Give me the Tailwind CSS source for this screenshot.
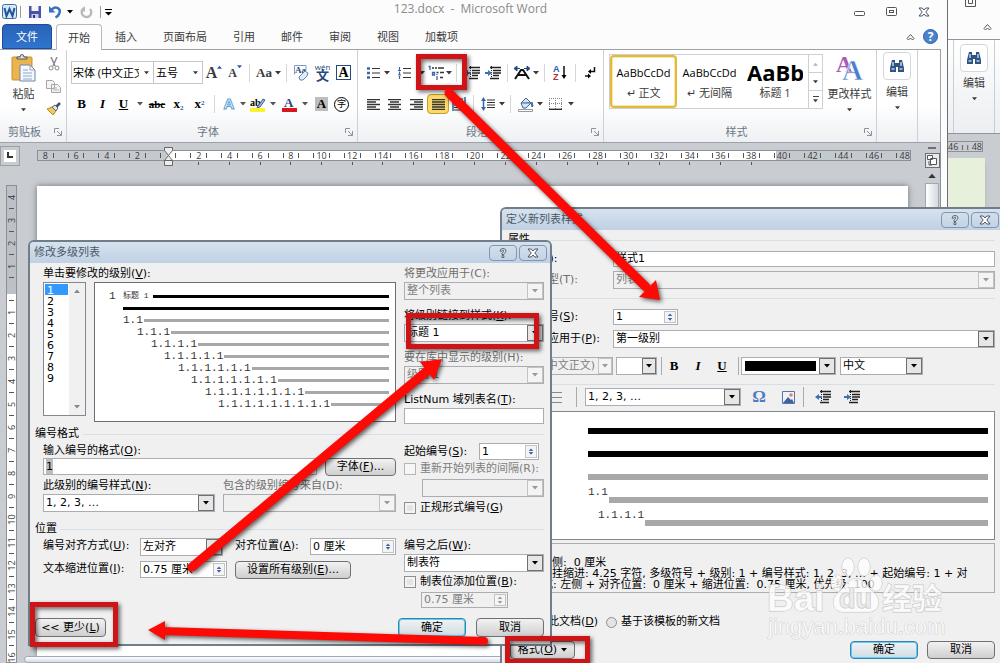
<!DOCTYPE html>
<html lang="zh-CN">
<head>
    <meta charset="UTF-8">
    <meta name="viewport" content="width=device-width, initial-scale=1.0">
    <title>123.docx - Microsoft Word</title>
    <script src="https://cdn.jsdelivr.net/npm/@tailwindcss/browser@4"></script>
</head>
<body class="relative h-screen overflow-hidden bg-[#c9cdd2] font-['Open_Sans','Noto_Sans_CJK_SC',sans-serif] text-[11px] leading-4 text-[#3b3b3b]">

    <!-- Shared symbols -->
    <svg class="hidden">
        <symbol id="caret" viewBox="0 0 6 4"><path d="M0 0h6L3 3.5z" fill="currentColor"/></symbol>
        <symbol id="caret-up" viewBox="0 0 6 4"><path d="M0 4h6L3 .5z" fill="currentColor"/></symbol>
        <symbol id="launcher" viewBox="0 0 8 8"><path d="M.5 5V.5H5M7.500 3v4.500H3M3 3l4 4" fill="none" stroke="#8a929c"/></symbol>
        <symbol id="binoculars" viewBox="0 0 16 16"><path d="M3 2h3v3h4V2h3l2 8v4H9V9H7v5H1v-4z" fill="#2f5482"/><path d="M2.500 11h3M10.500 11h3M4 4v4M12 4v4" stroke="#bcd3ee" stroke-width="1.500"/></symbol>
        <symbol id="outdent" viewBox="0 0 16 14"><path d="M5 1.500h11M5 12.500h9M8 4.500h8M8 7h8M8 9.500h6" stroke="#222" stroke-width="1.300"/><path d="M6.500 0v14" stroke="#222" stroke-dasharray="1 1"/><path d="M0 7l4-3v2h3v2H4v2z" fill="#3f6fb5"/></symbol>
        <symbol id="indent" viewBox="0 0 16 14"><path d="M5 1.500h11M5 12.500h9M8 4.500h8M8 7h8M8 9.500h6" stroke="#222" stroke-width="1.300"/><path d="M6.500 0v14" stroke="#222" stroke-dasharray="1 1"/><path d="M7 7L3 4v2H0v2h3v2z" fill="#3f6fb5"/></symbol>
        <symbol id="help" viewBox="0 0 12 12"><path d="M3 4.200Q3 1.500 6 1.500t3 2.500q0 1.500-2.200 2.700V7.500H5V6q2-1 2-2T6 3 4.800 4.200zM5 8.700h1.900v1.800H5z" fill="#fff" stroke="#4b5564" stroke-width=".9"/></symbol>
        <symbol id="close" viewBox="0 0 12 10"><path d="M1 1h3.200L6 3l1.800-2H11L7.800 5 11 9H7.800L6 7 4.200 9H1l3.200-4z" fill="#fff" stroke="#4b5564"/></symbol>
    </svg>

    <!-- Second Word window, partly hidden on the right -->
    <div class="absolute inset-y-0 left-[948px] right-0 flex flex-col overflow-hidden bg-[#c9cdd2]">
        <div class="flex h-[39px] shrink-0 flex-col items-end justify-between bg-[#fcfcfc] px-2 pb-2">
            <svg class="mr-4 h-[7px] w-[11px]" viewBox="0 0 11 7"><path d="M.5 0v6.500h10V0M3.500 0v3.500h4V0" fill="none" stroke="#555"/></svg>
            <svg class="h-2 w-[9px]" viewBox="0 0 9 8"><path d="M1 5.500L4.500 1.500 8 5.500 6.500 7 4.500 5 2.500 7z" fill="#fff" stroke="#555"/></svg>
        </div>
        <div class="flex h-[95px] shrink-0 border-y border-y-[#8f959c] bg-linear-to-b from-white to-[#eceef1]">
            <div class="w-[6px] border-r border-[#c9ced4]"></div>
            <button class="flex flex-1 flex-col items-center pt-1">
                <span class="flex h-7 w-7 items-center justify-center rounded-sm border border-[#d4d7db] bg-white"><svg class="size-4"><use href="#binoculars"/></svg></span>
                <span class="mt-[3px]">编辑</span>
                <svg class="mt-[6px] h-1 w-[5px]"><use href="#caret"/></svg>
            </button>
            <div class="w-[6px] border-l border-[#c9ced4]"></div>
        </div>
        <div class="mt-[7px] mr-[17px] flex h-[11px] shrink-0 items-center justify-between border border-l-0 border-[#8b9096] text-[9px] leading-none">
            <span>46</span><span>ı</span><span>ı</span><span>48</span>
        </div>
        <div class="mt-[6px] mr-[15px] flex-1 bg-[#e6f0da] shadow-md"></div>
    </div>

    <!-- Main Word window -->
    <div class="absolute inset-y-0 left-0 flex w-[948px] flex-col border-r border-[#6a6e73] bg-[#fcfcfc] pr-[6px]">
        <!-- Title bar -->
        <header class="relative flex h-6 shrink-0 items-center">
            <div class="flex items-center gap-[7px] pl-[2px]">
                <svg class="h-4 w-4" viewBox="0 0 16 16"><rect x=".5" y=".5" width="14" height="14" rx="2" fill="#d4e8f7" stroke="#3c6ea8"/><path d="M2.500 4l2 8 3-7 3 7 2-8" fill="none" stroke="#1f5597" stroke-width="2"/></svg>
                <span class="-ml-[5px] h-3 w-px bg-[#9a9a9a]"></span>
                <svg class="h-[14px] w-[14px]" viewBox="0 0 14 14"><path d="M1 1h12v12H1z" fill="#4a52a8"/><path d="M3.500 1h7v5h-7z" fill="#f4f6fb"/><path d="M3.500 9h7v4h-7z" fill="#c9cdea"/><path d="M5 10h2v3H5z" fill="#2d3580"/></svg>
                <svg class="h-[14px] w-[13px]" viewBox="0 0 13 14"><path d="M2 5.500C6 0 12 3 10.500 8q-1 3-4 4.500" fill="none" stroke="#3a6fc0" stroke-width="2.400"/><path d="M0 1v6.500h6.500z" fill="#3a6fc0"/></svg>
                <svg class="-ml-[2px] h-1 w-[6px] text-black"><use href="#caret"/></svg>
                <svg class="h-[13px] w-[13px]" viewBox="0 0 13 13"><path d="M3.500 2.500A4.800 4.800 0 1 0 10 3" fill="none" stroke="#bababa" stroke-width="2.400"/><path d="M5 0v6L.500 4z" fill="#bababa"/></svg>
                <span class="h-3 w-px bg-[#9a9a9a]"></span>
                <svg class="-ml-[3px] h-[7px] w-[7px]" viewBox="0 0 7 7"><path d="M0 .5h7" stroke="#000"/><path d="M0 3h7L3.500 6.500z"/></svg>
            </div>
            <h1 class="absolute inset-x-0 top-0 text-center text-[12px] leading-[18px] text-[#8a8a8a]">123.docx&nbsp; - &nbsp;Microsoft Word</h1>
            <div class="ml-auto flex items-center gap-[21px] pr-[11px]">
                <svg class="h-3 w-[11px]" viewBox="0 0 11 12"><rect x=".5" y="5.500" width="10" height="4" rx="1" fill="#fff" stroke="#555"/></svg>
                <svg class="h-[10px] w-[11px]" viewBox="0 0 11 10"><rect x=".5" y=".5" width="10" height="8" rx="1" fill="#fff" stroke="#555"/><rect x="3.500" y="3.500" width="4" height="2" fill="#fff" stroke="#555"/></svg>
                <svg class="h-[10px] w-3"><use href="#close"/></svg>
            </div>
        </header>

        <!-- Ribbon tabs -->
        <nav class="relative z-10 flex h-[25px] shrink-0 items-end pl-[2px]">
            <button class="h-full w-[50px] rounded-t-sm border border-[#1c4b9b] bg-linear-to-b from-[#2a63b8] to-[#2f74cf] text-white">文件</button>
            <button class="-mb-px ml-1 h-[26px] w-[46px] rounded-t-sm border border-b-0 border-[#b5b9be] bg-white">开始</button>
            <div class="flex h-full items-center gap-[26px] pl-[13px]">
                <button>插入</button>
                <button>页面布局</button>
                <button>引用</button>
                <button>邮件</button>
                <button>审阅</button>
                <button>视图</button>
                <button>加载项</button>
            </div>
            <div class="ml-auto flex h-full items-center gap-2 pr-[3px]">
                <svg class="h-2 w-[9px]" viewBox="0 0 9 8"><path d="M1 5.500L4.500 1.500 8 5.500 6.500 7 4.500 5 2.500 7z" fill="#fff" stroke="#555"/></svg>
                <button class="flex size-[15px] items-center justify-center rounded-full border border-[#2f62ab] bg-[#4b82cc] text-[12px] font-bold leading-none text-white">?</button>
            </div>
        </nav>

        <!-- Ribbon -->
        <section class="flex h-[94px] shrink-0 overflow-hidden border border-l-0 border-[#9da2a8] bg-linear-to-b from-white from-60% to-[#eef0f3]">
            <!-- Clipboard -->
            <div class="flex w-[67px] flex-col border-r border-[#cdd1d6]">
                <div class="flex flex-1">
                    <button class="flex w-11 flex-col items-center pl-[3px] pt-1">
                        <svg class="h-7 w-[25px]" viewBox="0 0 25 28"><rect x="1" y="3" width="20" height="23" rx="1" fill="#eab54f" stroke="#c98f2d"/><path d="M6 5V3h3q0-2.500 2-2.500T13 3h3v2z" fill="#ddd" stroke="#555"/><path d="M9 11h10l5 5v11H9z" fill="#f5f9ff" stroke="#6d84a8"/><path d="M19 11v5h5M12 16h5M12 19h9M12 22h9M12 25h9" fill="none" stroke="#8fa6c6"/></svg>
                        <span class="mt-1">粘贴</span>
                        <svg class="mt-[6px] h-1 w-[5px]"><use href="#caret"/></svg>
                    </button>
                    <div class="flex flex-col items-center gap-[9px] pt-[7px] pl-[2px]">
                        <svg class="h-[14px] w-3" viewBox="0 0 12 14"><path d="M3 0l4 9M9 0L5 9" stroke="#8c8c8c" stroke-width="1.500"/><circle cx="3" cy="11" r="2" fill="none" stroke="#8c8c8c"/><circle cx="9" cy="11" r="2" fill="none" stroke="#8c8c8c"/></svg>
                        <svg class="h-[13px] w-[15px]" viewBox="0 0 15 13"><path d="M.5.500h6l2 2v6h-8zM5.500 4.500h6l3 3v5h-9z" fill="#f4f4f4" stroke="#a5a5a5"/><path d="M7 8h4M7 10h6" stroke="#b5b5b5"/></svg>
                        <svg class="h-[14px] w-[15px]" viewBox="0 0 15 14"><path d="M1 7l5-2 4 4-3 4z" fill="#f1c757" stroke="#b78b25"/><path d="M6 5l3-2 3 3-2 3z" fill="#dfe5ee" stroke="#56657c"/><path d="M10.500 4.500L14 1" stroke="#40516b" stroke-width="2.500"/></svg>
                    </div>
                </div>
                <div class="flex h-[20px] items-center justify-between pr-1 pl-2 text-[#6c7684]"><span>剪贴板</span><svg class="h-2 w-2"><use href="#launcher"/></svg></div>
            </div>

            <!-- Font -->
            <div class="flex w-[291px] flex-col border-r border-[#cdd1d6] pl-[4px]">
                <div class="mt-[11px] flex h-[23px] items-center">
                    <div class="flex h-full w-[83px] items-center border border-[#c3c7cc] bg-white pr-1">
                        <select aria-label="字体" class="h-full min-w-0 flex-1 appearance-none px-px text-black outline-none"><option>宋体 (中文正文)</option></select>
                        <svg class="ml-1 h-1 w-[5px]"><use href="#caret"/></svg>
                    </div>
                    <div class="-ml-px flex h-full w-[50px] items-center border border-[#c3c7cc] bg-white pr-1">
                        <select aria-label="字号" class="h-full min-w-0 flex-1 appearance-none px-[2px] text-black outline-none"><option>五号</option></select>
                        <svg class="h-1 w-[5px]"><use href="#caret"/></svg>
                    </div>
                    <button class="flex w-[22px] justify-center font-['Liberation_Serif',serif] text-[16px] font-bold">A<svg class="h-1 w-[5px] text-[#2c5ba8]"><use href="#caret-up"/></svg></button>
                    <button class="flex w-[20px] justify-center font-['Liberation_Serif',serif] text-[12px] font-bold">A<svg class="h-1 w-[5px] text-[#2c5ba8]"><use href="#caret"/></svg></button>
                    <span class="mx-1 h-[18px] w-px bg-[#d3d6da]"></span>
                    <button class="w-5 font-['Liberation_Serif',serif] text-[13px] font-bold">Aa</button>
                    <svg class="mx-px h-1 w-[6px]"><use href="#caret"/></svg>
                    <span class="mx-1 h-[18px] w-px bg-[#d3d6da]"></span>
                    <button class="flex w-[21px] justify-center"><svg class="h-4 w-[15px]" viewBox="0 0 15 16"><path d="M.500 9.500v-9H12v5" fill="none" stroke="#7e9bc7"/><text x="1" y="8" font-size="9" font-weight="bold" font-family="Liberation Serif" fill="#26477c">Aa</text><path d="M5 12l6-6 3 2-1 3-4 4H6z" fill="#e4ecf8" stroke="#6484b4"/></svg></button>
                    <button class="flex w-[21px] flex-col items-center text-[#26477c]"><span class="text-[8px] leading-[6px]">wén</span><span class="text-[13px] leading-[11px] font-bold">文</span></button>
                    <button class="flex w-[21px] justify-center"><span class="size-[15px] border border-[#26477c] font-['Liberation_Serif',serif] text-[14px] font-bold leading-[14px] text-black">A</span></button>
                </div>
                <div class="mt-[9px] flex h-[22px] items-center font-['Liberation_Serif','Noto_Sans_CJK_SC',serif] text-[13px] font-bold text-black">
                    <button class="w-[21px]">B</button>
                    <button class="w-[21px] italic">I</button>
                    <button class="w-[21px] underline">U</button>
                    <svg class="mx-[3px] h-1 w-[6px] text-[#555]"><use href="#caret"/></svg>
                    <button class="w-[22px] text-[11px] line-through">abc</button>
                    <button class="w-[21px]">x<sub class="text-[7px] text-[#2c5ba8]">2</sub></button>
                    <button class="w-[21px]">x<sup class="text-[7px] text-[#2c5ba8]">2</sup></button>
                    <span class="mx-1 h-[18px] w-px bg-[#d3d6da]"></span>
                    <button class="w-5 font-['Liberation_Sans',sans-serif] text-[15px] text-white [-webkit-text-stroke:1px_#5ba3d6]">A</button>
                    <svg class="mx-px h-1 w-[6px] text-[#555]"><use href="#caret"/></svg>
                    <button class="flex w-[22px] flex-col items-center"><svg class="h-[15px] w-4" viewBox="0 0 16 15"><text x="0" y="9" font-size="10" font-family="Liberation Serif">ab</text><path d="M8 9l5-7 2 1-5 7-3 1z" fill="#9db5da" stroke="#41608f"/><path d="M0 11h15v4H0z" fill="#fdf32c"/></svg></button>
                    <svg class="mx-px h-1 w-[6px] text-[#555]"><use href="#caret"/></svg>
                    <button class="flex w-6 flex-col items-center"><svg class="h-[15px] w-4" viewBox="0 0 16 15"><text x="3" y="10" font-size="13" font-family="Liberation Serif" fill="#26477c">A</text><path d="M1 11h15v4H1z" fill="#d8171c"/></svg></button>
                    <svg class="mx-px h-1 w-[6px] text-[#555]"><use href="#caret"/></svg>
                    <button class="flex w-[25px] justify-center"><span class="h-[14px] w-[13px] bg-[#bdbdbd] leading-[14px]">A</span></button>
                    <button class="size-[15px] rounded-full border border-black text-[9px] leading-[12px] font-normal">字</button>
                </div>
                <div class="mt-auto flex h-[20px] items-center pr-1 text-[#6c7684]"><span class="flex-1 text-center">字体</span><svg class="h-2 w-2"><use href="#launcher"/></svg></div>
            </div>

            <!-- Paragraph -->
            <div class="flex w-[246px] flex-col border-r border-[#cdd1d6] pl-[5px]">
                <div class="mt-[11px] flex h-[23px] items-center">
                    <button class="flex w-5 justify-center"><svg class="h-3 w-[13px]" viewBox="0 0 13 12"><path d="M0 1.500h3M0 6h3M0 10.500h3" stroke="#3a66a8" stroke-width="2.500"/><path d="M5 1.500h8M5 6h8M5 10.500h8" stroke="#333" stroke-width="1.200"/></svg></button>
                    <svg class="mx-px h-1 w-[6px]"><use href="#caret"/></svg>
                    <button class="flex w-[27px] justify-center"><svg class="h-3 w-[13px]" viewBox="0 0 13 12"><path d="M1.500 0v3.500M1.500 4.500V8M1.500 9v3M0 3.500h3M0 8h3" stroke="#3a66a8" stroke-width="1.200"/><path d="M5 1.500h8M5 6h8M5 10.500h8" stroke="#333" stroke-width="1.200"/></svg></button>
                    <svg class="mx-px h-1 w-[6px]"><use href="#caret"/></svg>
                    <button class="flex w-[20px] justify-center"><svg class="h-[15px] w-4" viewBox="0 0 16 15"><path d="M.5 1.500h1.500V5M4.500 7.500h2V10h-2zM9 11v4M9 9v1" fill="none" stroke="#3a66a8" stroke-width="1.300"/><path d="M4 3h2M7 3h2M10 3h6M8.500 7.500h2M12 7.500h4M12 12.500h3" stroke="#333" stroke-width="1.400"/></svg></button>
                    <svg class="h-1 w-[6px]"><use href="#caret"/></svg>
                    <span class="mx-1 h-[18px] w-px bg-[#d3d6da]"></span>
                    <button class="flex w-[22px] justify-center"><svg class="h-[14px] w-4"><use href="#outdent"/></svg></button>
                    <button class="flex w-5 justify-center"><svg class="h-[14px] w-4"><use href="#indent"/></svg></button>
                    <span class="mx-1 h-[18px] w-px bg-[#d3d6da]"></span>
                    <button class="flex w-5 justify-center"><svg class="h-[14px] w-4" viewBox="0 0 16 14"><path d="M1 13L7 4h2l6 9M4 9h8" fill="none" stroke="#111" stroke-width="2"/><path d="M0 2.500L3 0v5zM16 2.500L13 0v5zM3 2.500h3M10 2.500h3" fill="#26477c" stroke="#26477c"/></svg></button>
                    <svg class="mx-px h-1 w-[6px]"><use href="#caret"/></svg>
                    <span class="mx-1 h-[18px] w-px bg-[#d3d6da]"></span>
                    <button class="flex w-[22px] justify-center"><svg class="h-4 w-[14px]" viewBox="0 0 14 16"><text x="0" y="7" font-size="9" font-weight="bold" font-family="Liberation Sans" fill="#2c5ba8">A</text><text x="0" y="15" font-size="9" font-weight="bold" font-family="Liberation Sans" fill="#a33">Z</text><path d="M11 1v11" stroke="#111" stroke-width="1.500"/><path d="M8.500 10h5L11 14z"/></svg></button>
                    <span class="mx-1 h-[18px] w-px bg-[#d3d6da]"></span>
                    <button class="flex w-5 justify-center"><svg class="h-3 w-[11px]" viewBox="0 0 11 12"><path d="M9.500 0v4.500H5M5 9H0" fill="none" stroke="#111" stroke-width="1.500"/><path d="M6 2v5L3 4.500zM3 6.500v5L6 9z"/></svg></button>
                </div>
                <div class="mt-[9px] flex h-[22px] items-center">
                    <button class="flex w-5 justify-center"><svg class="h-[11px] w-[13px]" viewBox="0 0 13 11"><path d="M0 .5h13M0 3h9M0 5.500h13M0 8h9M0 10.500h13" stroke="#333" stroke-width="1.300"/></svg></button>
                    <button class="flex w-[22px] justify-center"><svg class="h-[11px] w-[13px]" viewBox="0 0 13 11"><path d="M0 .5h13M2 3h9M0 5.500h13M2 8h9M0 10.500h13" stroke="#333" stroke-width="1.300"/></svg></button>
                    <button class="flex w-[22px] justify-center"><svg class="h-[11px] w-[13px]" viewBox="0 0 13 11"><path d="M0 .5h13M4 3h9M0 5.500h13M4 8h9M0 10.500h13" stroke="#333" stroke-width="1.300"/></svg></button>
                    <button class="flex h-5 w-[22px] items-center justify-center rounded-sm border border-[#c29b29] bg-[#fbd968]"><svg class="h-[11px] w-[13px]" viewBox="0 0 13 11"><path d="M0 .5h13M0 3h13M0 5.500h13M0 8h13M0 10.500h13" stroke="#333" stroke-width="1.300"/></svg></button>
                    <button class="flex w-5 justify-center"><svg class="h-[14px] w-[14px]" viewBox="0 0 14 14"><path d="M1 0v14M13 0v14" stroke="#3a66a8" stroke-width="1.500"/><path d="M2 5.500h10M2 8h10M2 10.500h10M2 13h10M3 2h8" stroke="#333"/></svg></button>
                    <span class="mx-1 h-[18px] w-px bg-[#d3d6da]"></span>
                    <button class="flex w-5 justify-center"><svg class="h-[14px] w-[14px]" viewBox="0 0 14 14"><path d="M2.500 3v8" stroke="#3a66a8" stroke-width="1.500"/><path d="M0 4l2.500-4L5 4zM0 10l2.500 4L5 10z" fill="#3a66a8"/><path d="M6 3h8M6 5.500h8M6 8h8M6 10.500h8" stroke="#333" stroke-width="1.200"/></svg></button>
                    <svg class="mx-px h-1 w-[6px]"><use href="#caret"/></svg>
                    <span class="mx-1 h-[18px] w-px bg-[#d3d6da]"></span>
                    <button class="flex w-[21px] justify-center"><svg class="h-[15px] w-4" viewBox="0 0 16 15"><path d="M3 6l5-5 5 5-5 5H5z" fill="#d6e4f5" stroke="#3f669c"/><path d="M3 6h10l1 4 1-1-1-4" fill="#5d8ac6" stroke="#3f669c"/><path d="M.5 12.500h14v2H.500z" fill="#fff" stroke="#999"/></svg></button>
                    <svg class="mx-px h-1 w-[6px]"><use href="#caret"/></svg>
                    <button class="flex w-[23px] justify-center"><svg class="h-3 w-[13px]" viewBox="0 0 13 12"><path d="M.5 0v11M6.500 0v11M12.500 0v11M0 .5h13M0 5.500h13" stroke="#888" stroke-dasharray="1 1"/><path d="M0 11.300h13" stroke="#222" stroke-width="1.300"/></svg></button>
                    <svg class="mx-px h-1 w-[6px]"><use href="#caret"/></svg>
                </div>
                <div class="mt-auto flex h-[20px] items-center pr-1 text-[#6c7684]"><span class="flex-1 text-center">段落</span><svg class="h-2 w-2"><use href="#launcher"/></svg></div>
            </div>

            <!-- Styles -->
            <div class="flex w-[273px] flex-col border-r border-[#cdd1d6] pl-[5px]">
                <div class="flex flex-1 pt-1">
                    <div class="flex h-[55px] w-[214px] border border-[#cdd1d6] bg-white">
                        <button class="flex w-[67px] flex-col items-center rounded-sm border-2 border-[#e3b93c] pt-1 inset-ring inset-ring-[#f9e7a5]"><span class="h-[24px] leading-[24px] text-[11px] text-black">AaBbCcDd</span><span>↵ 正文</span></button>
                        <button class="flex w-[65px] flex-col items-center pt-[6px]"><span class="h-[24px] leading-[24px] text-[11px] text-black">AaBbCcDd</span><span>↵ 无间隔</span></button>
                        <button class="flex w-[66px] flex-col items-center overflow-hidden pt-[6px]"><span class="h-[24px] w-[56px] overflow-hidden text-left text-[22px] font-bold leading-[22px] text-black">AaBb</span><span>标题 1</span></button>
                        <div class="flex flex-1 flex-col divide-y divide-[#cdd1d6] border-l border-[#cdd1d6]">
                            <button class="flex flex-1 items-center justify-center text-[#b5b5b5]"><svg class="h-1 w-[5px]"><use href="#caret-up"/></svg></button>
                            <button class="flex flex-1 items-center justify-center"><svg class="h-1 w-[5px]"><use href="#caret"/></svg></button>
                            <button class="flex flex-1 flex-col items-center justify-center gap-[2px]"><span class="h-px w-[6px] bg-[#444]"></span><svg class="h-1 w-[5px]"><use href="#caret"/></svg></button>
                        </div>
                    </div>
                    <button class="flex flex-1 flex-col items-center">
                        <svg class="h-7 w-7" viewBox="0 0 28 28"><text x="0" y="18" font-size="23" font-weight="bold" font-family="Liberation Serif" fill="#a95bb5">A</text><text x="6" y="26" font-size="29" font-weight="bold" font-family="Liberation Serif" fill="#4a7fcc" stroke="#fff" stroke-width=".6">A</text></svg>
                        <span class="mt-1">更改样式</span>
                        <svg class="mt-[6px] h-1 w-[5px]"><use href="#caret"/></svg>
                    </button>
                </div>
                <div class="flex h-[20px] items-center pr-1 text-[#6c7684]"><span class="flex-1 text-center">样式</span><svg class="h-2 w-2"><use href="#launcher"/></svg></div>
            </div>

            <!-- Editing -->
            <div class="w-[41px] border-r border-[#cdd1d6]">
                <button class="flex w-full flex-col items-center pt-[2px]">
                    <span class="flex h-7 w-7 items-center justify-center rounded-sm border border-[#d4d7db] bg-white"><svg class="size-4"><use href="#binoculars"/></svg></span>
                    <span class="mt-1">编辑</span>
                    <svg class="mt-[6px] h-1 w-[5px]"><use href="#caret"/></svg>
                </button>
            </div>
        </section>

        <!-- Document area -->
        <main class="flex min-h-0 flex-1 border-r border-[#8b9096] bg-[#c9cdd2]">
            <div class="flex w-[23px] shrink-0 flex-col items-center gap-[19px] pt-[3px]">
                <div class="flex size-5 shrink-0 items-center justify-center self-start border border-[#9ba0a6]"><span class="size-3 bg-white pt-[2px] pl-[3px]"><span class="block size-[6px] border-b-2 border-l-2 border-[#333]"></span></span></div>
                <div id="v-ruler" class="min-h-0 w-[11px] flex-1 overflow-hidden border border-[#8b9096] bg-[linear-gradient(#bcc1c7_108px,#fff_108px)] text-[9px] leading-none"></div>
            </div>
            <div class="flex min-w-0 flex-1 flex-col pl-[14px]">
                <div class="relative mt-[7px] mr-[13px] h-[22px] shrink-0">
                    <div class="h-[11px] overflow-hidden border border-[#8b9096] bg-[linear-gradient(to_right,#c4c9ce_131px,#fff_131px,#fff_738px,#c4c9ce_738px)]">
                        <div id="h-ruler" class="-mr-[10px] -ml-[8px] grid h-full grid-cols-[repeat(29,minmax(0,1fr))] text-[9px] leading-none"></div>
                    </div>
                    <div id="tab-stops" class="-mr-[9px] -ml-[7px] mt-px grid grid-cols-[repeat(29,minmax(0,1fr))] justify-items-center"></div>
                    <svg class="absolute -top-[3px] left-[127px] h-5 w-[9px]" viewBox="0 0 9 20"><path d="M.5.500h8v3l-4 5 4 5h-8l4-5-4-5zM.500 13.500h8v5h-8z" fill="#eee" stroke="#666"/></svg>
                </div>
                <div class="mt-[14px] mr-4 flex-1 bg-white shadow-[0_0_6px_#6b7076]"></div>
                <div class="-ml-[13px] flex h-[7px] shrink-0 items-center justify-center rounded-sm border border-[#9fa8b4] bg-linear-to-b from-white to-[#d5dde8]"></div>
            </div>
            <div class="flex w-[16px] shrink-0 flex-col items-center">
                <span class="mt-1 h-[2px] w-2 bg-[#6b7076]"></span>
                <button class="mt-1 flex size-[15px] shrink-0 items-center justify-center border border-[#6b7076] bg-[#e8eaed]"><svg class="h-[11px] w-[11px]" viewBox="0 0 11 11"><path d="M.500.500h5v4h-5zM3.500 3.500h6v6h-6zM2 6v4h3" fill="#fff" stroke="#555"/></svg></button>
                <svg class="my-[5px] h-[5px] w-2 shrink-0 text-[#333]" viewBox="0 0 6 4"><path d="M0 4h6L3 .5z" fill="currentColor"/></svg>
                <div class="w-[14px] flex-1 border border-[#9fa8b4] bg-linear-to-r from-white to-[#d5dae0]"></div>
            </div>
        </main>
    </div>

    <!-- Dialog: define new list style -->
    <section class="absolute top-[207px] -right-1 bottom-0 left-[500px] flex flex-col overflow-hidden rounded-tl-md border-t-2 border-l-2 border-[#717d89] bg-[#f0f0f0] font-['DejaVu_Sans','Noto_Sans_CJK_SC',sans-serif] text-black">
        <header class="flex h-[21px] shrink-0 items-center bg-linear-to-b from-[#d6e2ee] to-[#c0d1e4] pr-[5px] pl-1 text-[#4c5866]">
            <h2 class="flex-1">定义新列表样式</h2>
            <button class="mr-[2px] flex h-4 w-7 items-center justify-center rounded-sm border border-[#8496ad]"><svg class="size-3"><use href="#help"/></svg></button>
            <button class="flex h-4 w-7 items-center justify-center rounded-sm border border-[#8496ad]"><svg class="h-[10px] w-3"><use href="#close"/></svg></button>
        </header>
        <div class="flex flex-1 flex-col pr-[9px] pl-[6px]">
            <div class="mt-[2px] flex h-4 items-center gap-1"><span>属性</span><span class="h-px flex-1 bg-[#d5dfe5]"></span></div>
            <div class="mt-[3px] flex h-4 items-center pl-[7px]">
                <label for="style-name" class="w-[98px]">名称(<u>N</u>):</label>
                <input id="style-name" value="样式1" class="h-4 min-w-0 flex-1 border border-[#abadb3] bg-white px-[2px] outline-none">
            </div>
            <div class="mt-1 flex h-[18px] items-center pl-[7px]">
                <label for="style-type" class="w-[98px] text-[#6d6d6d]">样式类型(T):</label>
                <div class="flex h-full min-w-0 flex-1 border border-[#abadb3]">
                    <select id="style-type" disabled class="min-w-0 flex-1 appearance-none px-[2px] text-[#7d7d7d] opacity-100 outline-none"><option>列表</option></select>
                    <span class="flex w-4 items-center justify-center border border-[#c3c3c3] bg-[#f4f4f4] text-[#999]"><svg class="h-1 w-[6px]"><use href="#caret"/></svg></span>
                </div>
            </div>
            <div class="mt-px flex h-4 items-center gap-1"><span>格式</span><span class="h-px flex-1 bg-[#d5dfe5]"></span></div>
            <div class="mt-[3px] flex h-4 items-center pl-[7px]">
                <label for="style-start" class="w-[98px]">起始编号(<u>S</u>):</label>
                <div class="flex h-full w-[65px] border border-[#abadb3] bg-white">
                    <input id="style-start" value="1" class="min-w-0 flex-1 px-[2px] outline-none">
                    <span class="m-px flex w-3 flex-col items-center justify-evenly border border-[#c3c3c3] bg-[#f4f4f4] text-[#4360a0]"><svg class="h-[3px] w-[6px]"><use href="#caret-up"/></svg><svg class="h-[3px] w-[6px]"><use href="#caret"/></svg></span>
                </div>
            </div>
            <div class="mt-[5px] flex h-[18px] items-center pl-[7px]">
                <label for="style-apply" class="w-[98px]">将格式应用于(<u>P</u>):</label>
                <div class="flex h-full min-w-0 flex-1 border border-[#abadb3] bg-white">
                    <select id="style-apply" class="min-w-0 flex-1 appearance-none px-[2px] outline-none"><option>第一级别</option></select>
                    <span class="flex w-4 items-center justify-center border border-[#707070] bg-[#e6e6e6]"><svg class="h-1 w-[6px]"><use href="#caret"/></svg></span>
                </div>
            </div>
            <div class="mt-[9px] flex h-[18px] items-center pl-[7px]">
                <div class="flex h-full w-[98px] border border-[#abadb3]">
                    <select aria-label="字体" disabled class="min-w-0 flex-1 appearance-none px-px text-[#7d7d7d] opacity-100 outline-none"><option>宋体 (中文正文)</option></select>
                    <span class="flex w-[14px] items-center justify-center border border-[#c3c3c3] bg-[#f4f4f4] text-[#999]"><svg class="h-1 w-[6px]"><use href="#caret"/></svg></span>
                </div>
                <div class="ml-[3px] flex h-full w-[41px] border border-[#abadb3] bg-white">
                    <select aria-label="字号" class="min-w-0 flex-1 appearance-none outline-none"><option></option></select>
                    <span class="flex w-[14px] items-center justify-center border border-[#707070] bg-[#e6e6e6]"><svg class="h-1 w-[6px]"><use href="#caret"/></svg></span>
                </div>
                <span class="ml-1 h-full w-px bg-[#aaa]"></span>
                <div class="flex font-['Liberation_Serif',serif] text-[13px] font-bold">
                    <button class="w-6">B</button>
                    <button class="w-6 italic">I</button>
                    <button class="w-6 underline">U</button>
                </div>
                <span class="ml-1 h-full w-px bg-[#aaa]"></span>
                <button aria-label="字体颜色" class="ml-[2px] flex h-full w-[95px] border border-[#abadb3] bg-white">
                    <span class="m-[3px] h-[10px] flex-1 bg-black"></span>
                    <span class="flex h-full w-4 items-center justify-center border border-[#707070] bg-[#e6e6e6]"><svg class="h-1 w-[6px]"><use href="#caret"/></svg></span>
                </button>
                <div class="ml-1 flex h-full w-[83px] border border-[#abadb3] bg-white">
                    <select aria-label="语言" class="min-w-0 flex-1 appearance-none px-[2px] outline-none"><option>中文</option></select>
                    <span class="flex w-4 items-center justify-center border border-[#707070] bg-[#e6e6e6]"><svg class="h-1 w-[6px]"><use href="#caret"/></svg></span>
                </div>
            </div>
            <div class="mt-[9px] h-px bg-[#d5dfe5]"></div>
            <div class="mt-[3px] flex h-[18px] items-center pl-[38px]">
                <svg class="h-[11px] w-4" viewBox="0 0 16 11"><path d="M5 .5h11M5 5.500h11M5 10.500h11" stroke="#888"/></svg>
                <span class="ml-[14px] h-5 w-px bg-[#aaa]"></span>
                <div class="ml-2 flex h-full w-[156px] border border-[#abadb3] bg-white">
                    <select aria-label="编号样式" class="min-w-0 flex-1 appearance-none px-[2px] outline-none"><option>1, 2, 3, …</option></select>
                    <span class="flex w-4 items-center justify-center border border-[#707070] bg-[#e6e6e6]"><svg class="h-1 w-[6px]"><use href="#caret"/></svg></span>
                </div>
                <button class="ml-[6px] w-6 font-['Liberation_Serif',serif] text-[17px] font-bold text-[#4b7cc4]">Ω</button>
                <button class="ml-[11px]"><svg class="h-[13px] w-[13px]" viewBox="0 0 13 13"><path d="M.5.500h12v12H.500z" fill="#eef3fb" stroke="#5a76a6"/><path d="M1 12l5-6 3 3 1-1 2 4z" fill="#3d63a4"/><circle cx="9" cy="4" r="1.800" fill="#d98b57"/></svg></button>
                <span class="ml-2 h-5 w-px bg-[#aaa]"></span>
                <button class="ml-[11px]"><svg class="h-[14px] w-4"><use href="#outdent"/></svg></button>
                <button class="ml-[13px]"><svg class="h-[14px] w-4"><use href="#indent"/></svg></button>
            </div>
            <!-- Preview -->
            <div class="mt-[5px] ml-[7px] h-[129px] border border-[#828790] bg-white pr-[6px] pl-[72px] font-['Liberation_Mono',monospace] text-[11px] text-[#333]">
                <div class="flex h-[22px] items-end"><span class="h-[6px] flex-1 bg-black"></span></div>
                <div class="flex h-[23px] items-end"><span class="h-[6px] flex-1 bg-black"></span></div>
                <div class="flex h-[23px] items-end"><span class="h-[6px] flex-1 bg-[#a8a8a8]"></span></div>
                <div class="flex h-[23px] items-end gap-px"><span class="leading-[22px]">1.1</span><span class="h-[6px] flex-1 bg-[#a8a8a8]"></span></div>
                <div class="flex h-[23px] items-end gap-px pl-[10px]"><span class="leading-[22px]">1.1.1.1</span><span class="h-[6px] flex-1 bg-[#a8a8a8]"></span></div>
            </div>
            <div class="mt-[3px] ml-[7px] h-[50px] overflow-hidden border border-[#abadb3] pt-[2px] pl-1 leading-[11px] whitespace-pre">缩进:
<span class="ml-[21px]">左侧:  0 厘米</span>
<span class="ml-[21px]">悬挂缩进: 4.25 字符, 多级符号 + 级别: 1 + 编号样式: 1, 2, 3, … + 起始编号: 1 + 对</span>
齐方式: 左侧 + 对齐位置:  0 厘米 + 缩进位置:  0.75 厘米, 优先级: 100</div>
            <div class="mt-[21px] flex h-4 items-center pl-[7px]">
                <label class="flex w-[91px] items-center whitespace-nowrap"><input type="radio" name="scope" checked class="size-[11px]"><span>仅限此文档(<u>D</u>)</span></label>
                <label class="flex items-center gap-1"><input type="radio" name="scope" class="size-[11px] appearance-none rounded-full border border-[#8e8f8f] bg-[#e4e4e4]">基于该模板的新文档</label>
            </div>
            <div class="mt-[11px] flex h-[18px] items-center gap-[9px] pl-[2px]">
                <button class="mr-auto flex h-full w-[65px] items-center justify-center gap-1 rounded-sm border border-[#707070] bg-linear-to-b from-[#f2f2f2] to-[#cfcfcf]"><span>格式(<u>O</u>)</span><svg class="h-1 w-[6px]"><use href="#caret"/></svg></button>
                <button class="h-full w-[68px] rounded-sm border border-[#3c7fb1] bg-linear-to-b from-[#f2f2f2] to-[#cfdde4] inset-ring inset-ring-[#5fd0f0]">确定</button>
                <button class="h-full w-[68px] rounded-sm border border-[#707070] bg-linear-to-b from-[#f2f2f2] to-[#cfcfcf]">取消</button>
            </div>
        </div>
    </section>

    <!-- Dialog: modify multilevel list -->
    <section class="absolute top-[240px] left-[28px] h-[406px] w-[524px] overflow-hidden rounded-t-md border-2 border-[#717d89] bg-[#f0f0f0] font-['DejaVu_Sans','Noto_Sans_CJK_SC',sans-serif] text-black">
        <header class="flex h-[21px] items-center bg-linear-to-b from-[#d6e2ee] to-[#c0d1e4] pr-[3px] pl-1 text-[#4c5866]">
            <h2 class="flex-1">修改多级列表</h2>
            <button class="mr-[2px] flex h-4 w-7 items-center justify-center rounded-sm border border-[#8496ad]"><svg class="size-3"><use href="#help"/></svg></button>
            <button class="flex h-4 w-7 items-center justify-center rounded-sm border border-[#8496ad]"><svg class="h-[10px] w-3"><use href="#close"/></svg></button>
        </header>
        <div class="pr-[6px] pl-[5px]">
            <!-- Levels and links -->
            <div class="mt-[2px] grid grid-cols-[361px_1fr] gap-x-2">
                <div class="pl-2">
                    <label for="level" class="block h-[17px] leading-[18px]">单击要修改的级别(<u>V</u>):</label>
                    <div class="flex items-start gap-2">
                        <div class="flex h-[134px] w-[43px] border border-[#828790] bg-white">
                            <select id="level" size="9" class="h-full min-w-0 flex-1 appearance-none overflow-hidden p-px outline-none">
                                <option selected class="h-[11px] min-h-0 p-0 pl-[2px] leading-[11px] checked:bg-[linear-gradient(#3399ff,#3399ff)] checked:text-white">1</option>
                                <option class="h-[11px] min-h-0 p-0 pl-[2px] leading-[11px]">2</option>
                                <option class="h-[11px] min-h-0 p-0 pl-[2px] leading-[11px]">3</option>
                                <option class="h-[11px] min-h-0 p-0 pl-[2px] leading-[11px]">4</option>
                                <option class="h-[11px] min-h-0 p-0 pl-[2px] leading-[11px]">5</option>
                                <option class="h-[11px] min-h-0 p-0 pl-[2px] leading-[11px]">6</option>
                                <option class="h-[11px] min-h-0 p-0 pl-[2px] leading-[11px]">7</option>
                                <option class="h-[11px] min-h-0 p-0 pl-[2px] leading-[11px]">8</option>
                                <option class="h-[11px] min-h-0 p-0 pl-[2px] leading-[11px]">9</option>
                            </select>
                            <span class="flex w-4 flex-col items-center justify-between bg-[#f0f0f0] py-[6px] text-[#888]"><svg class="h-1 w-[6px]"><use href="#caret-up"/></svg><svg class="h-1 w-[6px]"><use href="#caret"/></svg></span>
                        </div>
                        <div class="h-[140px] flex-1 border border-[#6b6f75] bg-white pt-[7px] pr-[6px] pl-[28px] font-['Liberation_Mono','Noto_Sans_CJK_SC',monospace] leading-3 text-[#333]">
                            <div class="-ml-[14px] flex h-3 items-center"><span class="w-[14px]">1</span><span class="w-[30px] text-[8px]">标题 1</span><span class="h-[3px] flex-1 bg-black"></span></div>
                            <div class="flex h-3 items-center"><span class="h-[3px] flex-1 bg-black"></span></div>
                            <div class="flex h-3 items-center gap-px"><span>1.1</span><span class="h-[3px] flex-1 bg-[#a8a8a8]"></span></div>
                            <div class="flex h-3 items-center gap-px pl-[14px]"><span>1.1.1</span><span class="h-[3px] flex-1 bg-[#a8a8a8]"></span></div>
                            <div class="flex h-3 items-center gap-px pl-[28px]"><span>1.1.1.1</span><span class="h-[3px] flex-1 bg-[#a8a8a8]"></span></div>
                            <div class="flex h-3 items-center gap-px pl-[41px]"><span>1.1.1.1.1</span><span class="h-[3px] flex-1 bg-[#a8a8a8]"></span></div>
                            <div class="flex h-3 items-center gap-px pl-[55px]"><span>1.1.1.1.1.1</span><span class="h-[3px] flex-1 bg-[#a8a8a8]"></span></div>
                            <div class="flex h-3 items-center gap-px pl-[68px]"><span>1.1.1.1.1.1.1</span><span class="h-[3px] flex-1 bg-[#a8a8a8]"></span></div>
                            <div class="flex h-3 items-center gap-px pl-[82px]"><span>1.1.1.1.1.1.1.1</span><span class="h-[3px] flex-1 bg-[#a8a8a8]"></span></div>
                            <div class="flex h-3 items-center gap-px pl-[95px]"><span>1.1.1.1.1.1.1.1.1</span><span class="h-[3px] flex-1 bg-[#a8a8a8]"></span></div>
                        </div>
                    </div>
                </div>
                <div class="flex flex-col gap-[7px]">
                    <div>
                        <label for="apply-to" class="block h-[17px] leading-[18px] text-[#6d6d6d]">将更改应用于(C):</label>
                        <div class="flex h-[18px] border border-[#abadb3]">
                            <select id="apply-to" disabled class="min-w-0 flex-1 appearance-none px-[2px] text-[#7d7d7d] opacity-100 outline-none"><option>整个列表</option></select>
                            <span class="flex w-4 items-center justify-center border border-[#c3c3c3] bg-[#f4f4f4] text-[#999]"><svg class="h-1 w-[6px]"><use href="#caret"/></svg></span>
                        </div>
                    </div>
                    <div>
                        <label for="link-style" class="block h-[17px] leading-[18px] whitespace-nowrap">将级别链接到样式(<u>K</u>):</label>
                        <div class="flex h-[18px] border border-[#abadb3] bg-white">
                            <select id="link-style" class="min-w-0 flex-1 appearance-none px-[2px] outline-none"><option>标题 1</option></select>
                            <span class="flex w-4 items-center justify-center border border-[#707070] bg-[#e6e6e6]"><svg class="h-1 w-[6px]"><use href="#caret"/></svg></span>
                        </div>
                    </div>
                    <div>
                        <label for="gallery-level" class="block h-[17px] leading-[18px] whitespace-nowrap text-[#6d6d6d]">要在库中显示的级别(H):</label>
                        <div class="flex h-[18px] border border-[#abadb3]">
                            <select id="gallery-level" disabled class="min-w-0 flex-1 appearance-none px-[2px] text-[#7d7d7d] opacity-100 outline-none"><option>级别 1</option></select>
                            <span class="flex w-4 items-center justify-center border border-[#c3c3c3] bg-[#f4f4f4] text-[#999]"><svg class="h-1 w-[6px]"><use href="#caret"/></svg></span>
                        </div>
                    </div>
                    <div>
                        <label for="listnum" class="block h-[17px] leading-[18px] whitespace-nowrap">ListNum 域列表名(<u>T</u>):</label>
                        <input id="listnum" class="block h-4 w-full border border-[#abadb3] bg-white px-[2px] outline-none">
                    </div>
                </div>
            </div>

            <!-- Number format -->
            <div class="mt-[2px] flex h-4 items-center gap-1"><span>编号格式</span><span class="h-px flex-1 bg-[#d5dfe5]"></span></div>
            <div class="grid grid-cols-[361px_1fr] gap-x-2">
                <div class="pl-2">
                    <label for="number-format" class="block h-4 leading-[18px]">输入编号的格式(<u>O</u>):</label>
                    <div class="flex gap-2">
                        <input id="number-format" value="1" class="h-[17px] min-w-0 flex-1 border border-[#abadb3] bg-[linear-gradient(to_right,#fff_2px,#bcbcbc_2px,#bcbcbc_9px,#fff_9px)] px-[2px] outline-none">
                        <button class="h-[18px] w-[71px] rounded-sm border border-[#707070] bg-linear-to-b from-[#f2f2f2] to-[#cfcfcf] leading-4">字体(<u>F</u>)...</button>
                    </div>
                    <div class="mt-px grid grid-cols-[172px_1fr] gap-x-2">
                        <label for="number-style" class="h-[17px] leading-[18px]">此级别的编号样式(<u>N</u>):</label>
                        <label for="include-level" class="h-[17px] leading-[18px] whitespace-nowrap text-[#6d6d6d]">包含的级别编号来自(D):</label>
                        <div class="flex h-[18px] border border-[#abadb3] bg-white">
                            <select id="number-style" class="min-w-0 flex-1 appearance-none px-[2px] outline-none"><option>1, 2, 3, …</option></select>
                            <span class="flex w-4 items-center justify-center border border-[#707070] bg-[#e6e6e6]"><svg class="h-1 w-[6px]"><use href="#caret"/></svg></span>
                        </div>
                        <div class="flex h-[18px] border border-[#abadb3]">
                            <select id="include-level" disabled class="min-w-0 flex-1 appearance-none opacity-100 outline-none"><option></option></select>
                            <span class="flex w-4 items-center justify-center border border-[#c3c3c3] bg-[#f4f4f4] text-[#999]"><svg class="h-1 w-[6px]"><use href="#caret"/></svg></span>
                        </div>
                    </div>
                </div>
                <div class="pt-px">
                    <div class="flex h-[17px] items-center">
                        <label for="start-at" class="w-[75px]">起始编号(<u>S</u>):</label>
                        <div class="flex h-full w-[60px] border border-[#abadb3] bg-white">
                            <input id="start-at" value="1" class="min-w-0 flex-1 px-[2px] outline-none">
                            <span class="m-px flex w-3 flex-col items-center justify-evenly border border-[#c3c3c3] bg-[#f4f4f4] text-[#4360a0]"><svg class="h-[3px] w-[6px]"><use href="#caret-up"/></svg><svg class="h-[3px] w-[6px]"><use href="#caret"/></svg></span>
                        </div>
                    </div>
                    <label class="mt-px flex h-4 items-center gap-1 whitespace-nowrap text-[#7d7d7d]"><input type="checkbox" disabled class="size-3 shrink-0 appearance-none border border-[#b5b5b5] bg-[#f6f6f6]"><span>重新开始列表的间隔(R):</span></label>
                    <div class="mt-[2px] ml-[18px] flex h-[18px] border border-[#abadb3]">
                        <select aria-label="重新开始列表的间隔" disabled class="min-w-0 flex-1 appearance-none opacity-100 outline-none"><option></option></select>
                        <span class="flex w-4 items-center justify-center border border-[#c3c3c3] bg-[#f4f4f4] text-[#999]"><svg class="h-1 w-[6px]"><use href="#caret"/></svg></span>
                    </div>
                    <label class="mt-[3px] flex h-4 items-center gap-1"><input type="checkbox" class="size-3 appearance-none border border-[#8e8f8f] bg-[#e4e4e4] inset-ring-2 inset-ring-[#f4f4f4]"><span>正规形式编号(<u>G</u>)</span></label>
                </div>
            </div>

            <!-- Position -->
            <div class="mt-[5px] flex h-4 items-center gap-1"><span>位置</span><span class="h-px flex-1 bg-[#d5dfe5]"></span></div>
            <div class="grid grid-cols-[361px_1fr] gap-x-2">
                <div class="grid grid-cols-[97px_83px_87px_minmax(0,1fr)] content-start gap-y-[5px] pt-px pl-2">
                    <label for="align" class="h-[18px] whitespace-nowrap">编号对齐方式(<u>U</u>):</label>
                    <div class="flex h-[18px] border border-[#abadb3] bg-white">
                        <select id="align" class="min-w-0 flex-1 appearance-none px-[2px] outline-none"><option>左对齐</option></select>
                        <span class="flex w-4 items-center justify-center border border-[#707070] bg-[#e6e6e6]"><svg class="h-1 w-[6px]"><use href="#caret"/></svg></span>
                    </div>
                    <label for="align-at" class="pl-3 whitespace-nowrap">对齐位置(<u>A</u>):</label>
                    <div class="flex h-[17px] border border-[#abadb3] bg-white">
                        <input id="align-at" value="0 厘米" class="min-w-0 flex-1 px-[2px] outline-none">
                        <span class="m-px flex w-3 flex-col items-center justify-evenly border border-[#c3c3c3] bg-[#f4f4f4] text-[#4360a0]"><svg class="h-[3px] w-[6px]"><use href="#caret-up"/></svg><svg class="h-[3px] w-[6px]"><use href="#caret"/></svg></span>
                    </div>
                    <label for="indent-at" class="h-[18px] whitespace-nowrap">文本缩进位置(<u>I</u>):</label>
                    <div class="-mr-1 flex h-[17px] border border-[#abadb3] bg-white">
                        <input id="indent-at" value="0.75 厘米" class="min-w-0 flex-1 px-[2px] outline-none">
                        <span class="m-px flex w-3 flex-col items-center justify-evenly border border-[#c3c3c3] bg-[#f4f4f4] text-[#4360a0]"><svg class="h-[3px] w-[6px]"><use href="#caret-up"/></svg><svg class="h-[3px] w-[6px]"><use href="#caret"/></svg></span>
                    </div>
                    <button class="col-span-2 ml-3 h-[18px] w-[116px] rounded-sm border border-[#707070] bg-linear-to-b from-[#f2f2f2] to-[#cfcfcf] leading-4">设置所有级别(<u>E</u>)...</button>
                </div>
                <div>
                    <label for="follow" class="block h-[17px] leading-[18px]">编号之后(<u>W</u>):</label>
                    <div class="flex h-[18px] border border-[#abadb3] bg-white">
                        <select id="follow" class="min-w-0 flex-1 appearance-none px-[2px] outline-none"><option>制表符</option></select>
                        <span class="flex w-4 items-center justify-center border border-[#707070] bg-[#e6e6e6]"><svg class="h-1 w-[6px]"><use href="#caret"/></svg></span>
                    </div>
                    <label class="mt-[2px] flex h-4 items-center gap-1 whitespace-nowrap"><input type="checkbox" class="size-3 appearance-none border border-[#8e8f8f] bg-[#e4e4e4] inset-ring-2 inset-ring-[#f4f4f4]"><span>制表位添加位置(<u>B</u>):</span></label>
                    <div class="mt-[2px] ml-[17px] flex h-4 w-[87px] border border-[#abadb3] text-[#7d7d7d]">
                        <input aria-label="制表位位置" disabled value="0.75 厘米" class="min-w-0 flex-1 px-[2px] outline-none">
                        <span class="m-px flex w-3 flex-col items-center justify-evenly border border-[#c3c3c3] bg-[#f4f4f4] text-[#999]"><svg class="h-[3px] w-[6px]"><use href="#caret-up"/></svg><svg class="h-[3px] w-[6px]"><use href="#caret"/></svg></span>
                    </div>
                </div>
            </div>

            <div class="mt-[10px] flex h-[19px] gap-[10px]">
                <button class="mr-auto w-[71px] rounded-sm border border-[#707070] bg-linear-to-b from-[#f2f2f2] to-[#cfcfcf]">&lt;&lt; 更少(<u>L</u>)</button>
                <button class="w-[68px] rounded-sm border border-[#3c7fb1] bg-linear-to-b from-[#f2f2f2] to-[#cfdde4] inset-ring inset-ring-[#5fd0f0]">确定</button>
                <button class="w-[68px] rounded-sm border border-[#707070] bg-linear-to-b from-[#f2f2f2] to-[#cfcfcf]">取消</button>
            </div>
        </div>
    </section>

    <!-- Watermark -->
    <svg class="pointer-events-none absolute top-[550px] left-[760px] h-[95px] w-[195px]" viewBox="0 0 195 95" fill="#fff" fill-opacity=".75" stroke="#c4c4c4" stroke-width="1" paint-order="stroke" font-family="Liberation Sans, Noto Sans CJK SC, sans-serif">
        <ellipse cx="88" cy="17" rx="6" ry="9"/>
        <ellipse cx="104" cy="17" rx="6" ry="9"/>
        <ellipse cx="77" cy="33" rx="6" ry="8"/>
        <ellipse cx="116" cy="33" rx="6" ry="8"/>
        <path d="M96 29c9 0 10 8 17 13 8 6 8 19-4 20H83c-12-1-12-14-4-20 7-5 8-13 17-13z"/>
        <text x="7" y="61" font-size="37" font-weight="bold">Bai</text>
        <text x="79" y="58" font-size="27" font-weight="bold" fill="#e8e8e8">du</text>
        <text x="122" y="59" font-size="30" font-weight="bold">经验</text>
        <text x="8" y="84" font-size="22" stroke-width=".7">jingyan.baidu.com</text>
    </svg>

    <!-- Callout boxes and arrows -->
    <svg class="pointer-events-none absolute top-0 left-0 h-[663px] w-[1000px] drop-shadow-[2px_2px_2px_rgba(0,0,0,0.6)]" viewBox="0 0 1000 663">
        <g fill="none" stroke="#cf1418" stroke-width="5">
            <rect x="418.500" y="56.500" width="46" height="31"/>
            <rect x="408.500" y="315.500" width="128" height="31"/>
            <rect x="32.500" y="604.500" width="83" height="40"/>
            <rect x="507.500" y="638.500" width="80" height="23"/>
        </g>
        <g stroke="#fb0a06" stroke-width="9" stroke-linecap="round">
            <path d="M449 93L646 287"/>
            <path d="M192 567L427 371"/>
            <path d="M484 641L162 631" stroke-width="8"/>
        </g>
        <g fill="#fb0a06">
            <path d="M660 300L639 297 656 280z"/>
            <path d="M442 359L420 362 434 380z"/>
            <path d="M148 630l17-9v19z"/>
        </g>
    </svg>

    <script>
        const hRuler = document.getElementById('h-ruler');
        const vRuler = document.getElementById('v-ruler');
        const tabStops = document.getElementById('tab-stops');

        // Horizontal ruler: 8 down to 2, the origin, then 2 up to 48
        for (let n = -8; n <= 48; n += 2) {
            hRuler.innerHTML += `<div class="flex items-center px-[7px]"><span class="h-[5px] w-px bg-[#555]"></span><span class="flex-1 text-center">${n ? Math.abs(n) : ''}</span><span class="h-[5px] w-px bg-[#555]"></span></div>`;
            // Default tab stops sit under the numbers of the text area
            tabStops.innerHTML += n > 0 && n < 40 ? '<span class="h-[3px] w-px bg-[#555]"></span>' : '<span></span>';
        }

        // Vertical ruler: 4 down to 1, the origin, then 1 up to 16
        for (let n = -4; n <= 16; n++) {
            vRuler.innerHTML += `<div class="flex h-[23px] flex-col items-center justify-between pt-[7px]"><span class="-rotate-90">${n ? Math.abs(n) : ''}</span><span class="h-px w-[5px] bg-[#555]"></span></div>`;
        }
    </script>
</body>
</html>
